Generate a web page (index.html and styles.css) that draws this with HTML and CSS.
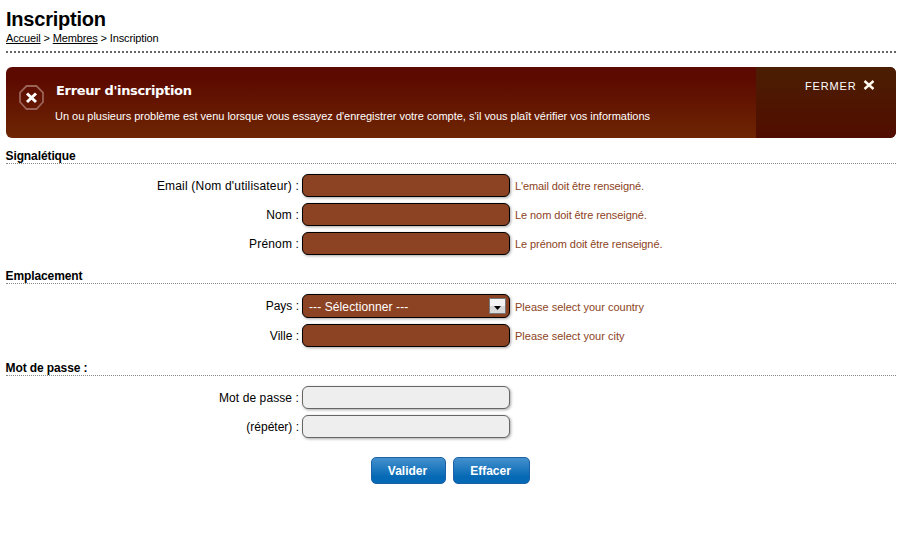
FILE: index.html
```html
<!DOCTYPE html>
<html lang="fr">
<head>
<meta charset="utf-8">
<title>Inscription</title>
<link rel="stylesheet" href="styles.css">
</head>
<body>
<header class="page-header">
  <h1>Inscription</h1>
  <nav class="crumbs"><a href="#">Accueil</a> &gt; <a href="#">Membres</a> &gt; Inscription</nav>
</header>
<section class="alert">
  <svg class="alert-icon" width="26" height="26" viewBox="0 0 26 26" fill="none">
    <path d="M7.500 1h10l6.500 6.500v9.500l-6.500 7h-10l-6.500-7V7.500z" stroke="#9b6358" stroke-width="1.800"/>
    <path d="M8 8.500l9 8.500M17 8.500l-9 8.500" stroke="#fff" stroke-width="3"/>
  </svg>
  <div class="alert-text">
    <h2>Erreur d'inscription</h2>
    <p>Un ou plusieurs problème est venu lorsque vous essayez d'enregistrer votre compte, s'il vous plaît vérifier vos informations</p>
  </div>
  <div class="alert-close">
    <span>FERMER</span>
    <svg width="12" height="12" viewBox="0 0 12 12"><path d="M1.500 2l9 8M10.500 2l-9 8" stroke="#fff8ee" stroke-width="2.400"/></svg>
  </div>
</section>
<form>
  <h3>Signalétique</h3>
  <div class="rows">
    <div class="row"><label class="l-email" for="email">Email (Nom d'utilisateur) :</label><input class="field error" id="email"><span class="hint h-email">L'email doit être renseigné.</span></div>
    <div class="row"><label class="l-short" for="nom">Nom :</label><input class="field error" id="nom"><span class="hint h-nom">Le nom doit être renseigné.</span></div>
    <div class="row"><label class="l-short" for="prenom">Prénom :</label><input class="field error" id="prenom"><span class="hint h-nom">Le prénom doit être renseigné.</span></div>
  </div>
  <h3>Emplacement</h3>
  <div class="rows">
    <div class="row row-select"><label>Pays :</label>
      <div class="field error select"><span>--- Sélectionner ---</span><i class="arrow"><svg width="7" height="4" viewBox="0 0 7 4"><path d="M0 0h7L3.500 4z" fill="#000"/></svg></i></div>
      <span class="hint">Please select your country</span></div>
    <div class="row"><label for="ville">Ville :</label><input class="field error" id="ville"><span class="hint">Please select your city</span></div>
  </div>
  <h3>Mot de passe :</h3>
  <div class="rows">
    <div class="row"><label class="l-mdp" for="mdp">Mot de passe :</label><input class="field" id="mdp" type="password"></div>
    <div class="row"><label for="mdp2">(répéter) :</label><input class="field" id="mdp2" type="password"></div>
  </div>
  <div class="actions"><button type="button" class="valider">Valider</button><button type="button" class="effacer">Effacer</button></div>
</form>
</body>
</html>
```
FILE: styles.css
```css
* { box-sizing: border-box; }
body { margin: 0; padding: 7px 5px 0 6px; background: #fff; color: #000; font: 12px "Liberation Sans", Arial, sans-serif; }
h1, h2, h3, p { margin: 0; }
.page-header { height: 46px; border-bottom: 2px dotted #666; }
h1 { font-size: 20px; line-height: 24px; letter-spacing: -.22px; }
.crumbs { font-size: 11px; line-height: 14px; letter-spacing: -.13px; }
.crumbs a { color: #000; text-underline-offset: 1px; text-decoration-thickness: 1px; }
.alert { display: flex; height: 71px; margin-top: 14px; border-radius: 6px; overflow: hidden; color: #fff; background: linear-gradient(#5c0900 15%, #6e2603); }
.alert-icon { flex: none; margin: 18px 11px 0 13px; }
.alert-text { flex: 1; }
h2 { margin-top: 15px; font: bold 13px/18px "DejaVu Sans", Verdana, sans-serif; letter-spacing: -.33px; white-space: nowrap; }
.alert-text p { margin: 9px 0 0 -1px; font-size: 11px; line-height: 14px; letter-spacing: -.018px; white-space: nowrap; }
.alert-close { display: flex; width: 140px; padding: 12px 21px 0 49px; justify-content: space-between; align-items: flex-start; background: linear-gradient(#4b1e02, #510d00); }
.alert-close span { font-size: 11px; line-height: 14px; letter-spacing: .85px; }
h3 { height: 16px; border-bottom: 1px dotted #888; font-size: 12px; line-height: 17px; letter-spacing: -.1px; text-indent: -.5px; }
form { padding-top: 10px; }
.rows { display: flex; flex-direction: column; gap: 6px; padding: 10px 0 13px; }
.row { display: flex; height: 23px; align-items: center; }
.row-select { height: 24px; }
label { width: 293px; text-align: right; white-space: nowrap; }
.l-email { letter-spacing: .19px; }
.l-short { letter-spacing: .15px; }
.l-mdp { letter-spacing: .1px; }
.field { width: 208px; height: 100%; margin: 0 5px 0 3px; padding: 0 6px; border: 1px solid #666; border-radius: 6px; background: #eee; box-shadow: 1px 1px 3px rgba(0,0,0,.35); outline: 0; font: inherit; }
.error { border-color: #000; background: #8c4323; color: #fff; }
.select { display: flex; align-items: center; justify-content: space-between; padding: 0 3px 0 6px; letter-spacing: .1px; }
.select span { padding-top: 1px; }
.arrow { display: flex; width: 17px; height: 16px; align-items: center; justify-content: center; border: 1px solid #777; background: linear-gradient(#f4f4f4 50%, #d9d9d9 50%); padding-top: 3px; }
.hint { color: #8c4323; font-size: 11px; line-height: 14px; padding-top: 1px; white-space: nowrap; }
.h-email { letter-spacing: -.1px; }
.h-nom { letter-spacing: -.08px; }
.actions { display: flex; gap: 7px; padding: 6px 0 0 365px; }
button { width: 75px; height: 27px; padding: 0 2px 0 0; border: 1px solid #1a62a5; border-radius: 5px; background: linear-gradient(#4490cd, #0669b5 75%); color: #fff; font: bold 12px "Liberation Sans", Arial, sans-serif; }
.effacer { width: 77px; }
```
